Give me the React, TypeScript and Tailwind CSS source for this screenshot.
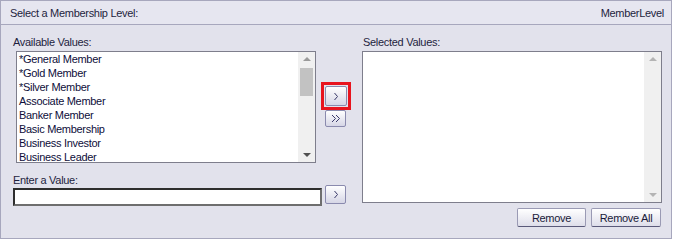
import React from "react";

const items = [
  "*General Member",
  "*Gold Member",
  "*Silver Member",
  "Associate Member",
  "Banker Member",
  "Basic Membership",
  "Business Investor",
  "Business Leader",
];

function Chevron({ double }: { double?: boolean }) {
  return double ? (
    <svg width="10" height="9" viewBox="0 0 10 9" className="block">
      <polyline points="1,1 4.5,4.5 1,8" fill="none" stroke="#3a3a6a" strokeWidth="1" />
      <polyline points="5,1 8.5,4.5 5,8" fill="none" stroke="#3a3a6a" strokeWidth="1" />
    </svg>
  ) : (
    <svg width="6" height="9" viewBox="0 0 6 9" className="block">
      <polyline points="1.5,1 4.5,4.5 1.5,8" fill="none" stroke="#3a3a6a" strokeWidth="1" />
    </svg>
  );
}

function SmallButton({ w, h, double }: { w: string; h: string; double?: boolean }) {
  return (
    <div
      className={`${w} ${h} flex items-center justify-center rounded-[2px] border border-[#8a8aae] bg-gradient-to-b from-white to-[#d6d6e6]`}
    >
      <Chevron double={double} />
    </div>
  );
}

function Scrollbar({ active }: { active: boolean }) {
  const arrow = active ? "#9a9a9a" : "#b4b4b4";
  const down = active ? "#505050" : "#b4b4b4";
  return (
    <div className="w-[17px] h-full bg-[#f0f0f0] flex flex-col items-center">
      <div className="h-[14px] flex items-center justify-center">
        <svg width="8" height="5" viewBox="0 0 8 5">
          <polygon points="0,4 4,0 8,4" fill={arrow} />
        </svg>
      </div>
      {active ? <div className="mt-[2px] w-[13px] h-[28px] bg-[#c2c2c2]" /> : null}
      <div className="flex-1" />
      <div className="h-[14px] flex items-center justify-center">
        <svg width="8" height="5" viewBox="0 0 8 5">
          <polygon points="0,0 8,0 4,4" fill={down} />
        </svg>
      </div>
    </div>
  );
}

export default function App() {
  return (
    <div className="w-[674px] h-[241px] bg-white">
      <div className="w-[672px] h-[239px] border border-[#a7a7bd] bg-[#e2e2ec] font-['Liberation_Sans',sans-serif] text-[11px] leading-[14px] tracking-[-0.3px] text-[#1e1e3e]">
        <div className="h-[24px] border-b border-[#a7a7bd] bg-[#e6e6f0] flex items-center justify-between pl-[9px] pr-[7px]">
          <span>Select a Membership Level:</span>
          <span>MemberLevel</span>
        </div>
        <div className="flex pl-[12px]">
          <div className="w-[309px] flex flex-col pt-[10px]">
            <div className="h-[14px]">Available Values:</div>
            <div className="mt-[2px] ml-[3px] w-[300px] h-[112px] border border-[#7e7e8c] bg-white flex">
              <div className="flex-1 pl-[2px] text-[#0e0e3a]">
                {items.map((t) => (
                  <div key={t} className="h-[14px] whitespace-nowrap">
                    {t}
                  </div>
                ))}
              </div>
              <Scrollbar active />
            </div>
            <div className="mt-[10px] h-[14px]">Enter a Value:</div>
            <div className="mt-[1px] w-[309px] h-[18px] border-2 border-t-[#2e2e2e] border-l-[#2e2e2e] border-b-[#6e6e6e] border-r-[#6e6e6e] bg-white" />
          </div>
          <div className="w-[40px] flex flex-col">
            <div className="mt-[57px] -ml-px w-[30px] h-[28px] border-[3px] border-[#e8141e] p-[1px]">
              <SmallButton w="w-[22px]" h="h-[20px]" />
            </div>
            <div className="ml-[3px]">
              <SmallButton w="w-[21px]" h="h-[17px]" double />
            </div>
            <div className="mt-[58px] ml-[3px]">
              <SmallButton w="w-[21px]" h="h-[19px]" />
            </div>
          </div>
          <div className="w-[300px] flex flex-col pt-[10px]">
            <div className="h-[14px] pl-px">Selected Values:</div>
            <div className="mt-[2px] w-[300px] h-[152px] border border-[#7e7e8c] bg-white flex">
              <div className="flex-1" />
              <Scrollbar active={false} />
            </div>
            <div className="mt-[5px] flex justify-end gap-[5px] pr-px">
              <div className="w-[69px] h-[19px] flex items-center justify-center rounded-[2px] border border-[#9a9ab4] border-b-[#5a5a7a] bg-gradient-to-b from-white to-[#dedeea] text-[#1a1a3a]">
                Remove
              </div>
              <div className="w-[70px] h-[19px] flex items-center justify-center rounded-[2px] border border-[#9a9ab4] border-b-[#5a5a7a] bg-gradient-to-b from-white to-[#dedeea] text-[#1a1a3a]">
                Remove All
              </div>
            </div>
          </div>
        </div>
      </div>
    </div>
  );
}
